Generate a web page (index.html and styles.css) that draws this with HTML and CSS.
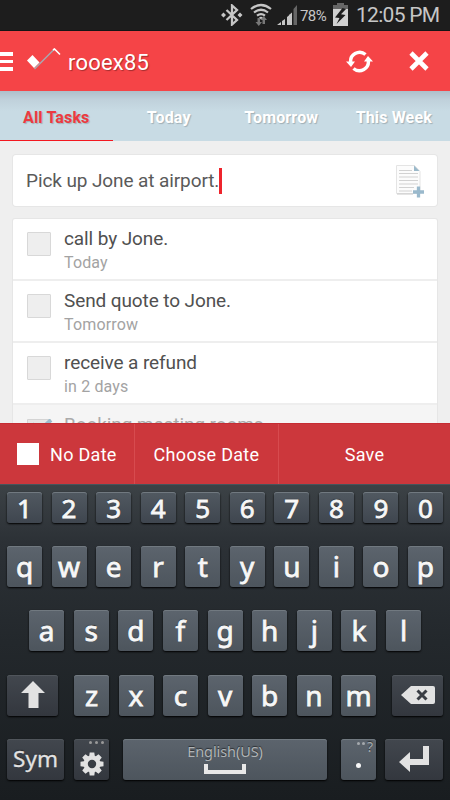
FILE: index.html
```
<!DOCTYPE html>
<html lang="en">
<head>
<meta charset="utf-8">
<title>Tasks</title>
<link rel="stylesheet" href="styles.css">
</head>
<body>
<div class="phone">
  <div class="status">
    <svg class="bt" width="22" height="22" viewBox="0 0 22 22"><path d="M5.500 6l10.500 10-5 4.500V1.500l5 4.500L5.500 16" fill="none" stroke="#c6c6c6" stroke-width="2.300"/><path d="M2.500 8.500L5 11l-2.500 2.500L0 11zM19 8.500l2.500 2.500-2.500 2.500-2.500-2.500z" fill="#c6c6c6"/></svg>
    <svg class="wifi" width="22" height="24" viewBox="0 0 22 24"><g fill="none" stroke="#c6c6c6" stroke-width="2.200"><path d="M1 6q10-8 20 0M4 9.500q7-5.500 14 0M7 12.700q4-3 8 0"/></g><path d="M9 14.500q2-1.500 4 0l-2 2z" fill="#c6c6c6"/><path d="M7.500 15h2.500v4h2l-3.200 4-3.300-4h2zM12.500 21v-4h-2l3.200-4 3.300 4h-2v4z" fill="#777"/></svg>
    <svg class="signal" width="21" height="20" viewBox="0 0 21 20"><path d="M0 20l4-3v3zM5 16l3-2v6H5zM10 12l3-2.500V20h-3z" fill="#c6c6c6"/><path d="M12 10l3-2.500V20h-3z" fill="#c6c6c6"/><path d="M16.500 4l3.500-4v20h-3.500z" fill="#666"/></svg>
    <span class="pct">78%</span>
    <svg class="battery" width="15" height="23" viewBox="0 0 15 23"><path d="M4 0h7v2h4v6H0V2h4z" fill="#666"/><path d="M0 6h15v17H0z" fill="#d0d0d0"/><path d="M9.500 5L2 14.500l4.500.5L3.500 21l9-9-4.500-.7L13 6z" fill="#1d1d1d"/></svg>
    <span class="clock">12:05 PM</span>
  </div>
  <header class="header">
    <div class="menu"><i></i><i></i><i></i></div>
    <svg class="logo" width="34" height="22" viewBox="0 0 34 22"><path d="M7.500 21L27.500 1" stroke="#a9aab0" stroke-width="1.500"/><path d="M26 2l1.500-1L33 6.500" fill="none" stroke="#fff" stroke-width="1.600"/><path d="M0 12.500L5.500 7l7 7.500L7 20z" fill="#fff"/></svg>
    <span class="user">rooex85</span>
    <svg class="sync" width="27" height="23" viewBox="0 0 27 23"><g fill="none" stroke="#fff" stroke-width="3.400"><path d="M4.800 13A9 9 0 0 1 19.500 4.500M22.200 10A9 9 0 0 1 7.500 18.500"/></g><path d="M0 11.500h9L5 17zM18 11.500h9L22 6z" fill="#fff"/></svg>
    <svg class="close" width="20" height="20" viewBox="0 0 20 20"><path d="M2 2l16 16M18 2L2 18" stroke="#fff" stroke-width="4.600"/></svg>
  </header>
  <nav class="tabs">
    <span class="tab active">All Tasks</span><span class="tab">Today</span><span class="tab">Tomorrow</span><span class="tab">This Week</span>
  </nav>
  <main class="content">
    <div class="entry">
      <span class="entry-text">Pick up Jone at airport.</span><i class="caret"></i>
      <svg class="note" width="30" height="34" viewBox="0 0 30 34"><path d="M1.500 1.500h18l5.500 6v22h-23.500z" fill="#fcfcfc" stroke="#e4e4e4"/><path d="M4 6.500h13M4 9.500h19M4 13h19M4 16.500h19M4 20h19M4 23.500h15M4 27h13" stroke="#d2d2d2"/><path d="M2 30h16" stroke="#c9c9c9"/><path d="M19 1.500v5.500h5.500z" fill="#9bb9ca"/><path d="M23.500 22.500v11M18 28h11" stroke="#9ab9cc" stroke-width="3.300"/></svg>
    </div>
    <div class="list">
      <div class="task"><i class="box"></i><div><p class="title">call by Jone.</p><p class="due">Today</p></div></div>
      <div class="task"><i class="box"></i><div><p class="title">Send quote to Jone.</p><p class="due">Tomorrow</p></div></div>
      <div class="task"><i class="box"></i><div><p class="title">receive a refund</p><p class="due">in 2 days</p></div></div>
      <div class="task done"><svg class="box-done" width="27" height="25" viewBox="0 0 27 25"><path d="M.5.5h23v23H.5z" fill="#e6e6e6" stroke="#d4d4d4"/><path d="M5 5l7 7L24 1" fill="none" stroke="#9bbccd" stroke-width="4"/></svg><div><p class="title">Booking meeting rooms</p></div></div>
    </div>
  </main>
  <div class="actions">
    <span class="action nodate"><i></i>No Date</span><span class="action choose">Choose Date</span><span class="action save">Save</span>
  </div>
  <div class="keyboard">
    <div class="row digits"><b class="key">1</b><b class="key">2</b><b class="key">3</b><b class="key">4</b><b class="key">5</b><b class="key">6</b><b class="key">7</b><b class="key">8</b><b class="key">9</b><b class="key">0</b></div>
    <div class="row"><b class="key">q</b><b class="key">w</b><b class="key">e</b><b class="key">r</b><b class="key">t</b><b class="key">y</b><b class="key">u</b><b class="key">i</b><b class="key">o</b><b class="key">p</b></div>
    <div class="row home"><b class="key">a</b><b class="key">s</b><b class="key">d</b><b class="key">f</b><b class="key">g</b><b class="key">h</b><b class="key">j</b><b class="key">k</b><b class="key">l</b></div>
    <div class="row lower">
      <b class="key dark wide"><svg width="24" height="27" viewBox="0 0 24 27"><path d="M12 0l12 12h-6.500v15h-10V12H0z" fill="#e2e2e2"/></svg></b>
      <div class="letters"><b class="key">z</b><b class="key">x</b><b class="key">c</b><b class="key">v</b><b class="key">b</b><b class="key">n</b><b class="key">m</b></div>
      <b class="key dark wide"><svg width="34" height="18" viewBox="0 0 34 18"><path d="M10 0h22q2 0 2 2v14q0 2-2 2H10L0 9z" fill="#e2e2e2"/><path d="M16.500 4.500l9 9M25.500 4.500l-9 9" stroke="#393d44" stroke-width="3"/></svg></b>
    </div>
    <div class="row bottom">
      <b class="key dark sym">Sym</b>
      <b class="key dark gear"><span class="dots"><i></i><i></i><i></i></span><svg width="24" height="24" viewBox="-12 -12 24 24"><g fill="#e2e2e2"><path id="tooth" d="M-2.300-11.500h4.600l.7 5h-6zM-2.300 11.500h4.600l.7-5h-6z"/><use href="#tooth" transform="rotate(45)"/><use href="#tooth" transform="rotate(90)"/><use href="#tooth" transform="rotate(135)"/></g><circle r="6.300" fill="none" stroke="#e2e2e2" stroke-width="4.200"/></svg></b>
      <b class="key space"><span>English(US)</span><i></i></b>
      <b class="key period"><span class="hint"><i></i><i></i>?</span><i class="dot"></i></b>
      <b class="key dark enter"><svg width="30" height="26" viewBox="0 0 30 26"><path d="M0 16L11 6v7h13V0h6v19H11v7z" fill="#e2e2e2"/></svg></b>
    </div>
  </div>
</div>
</body>
</html>
```

FILE: styles.css
```
* { box-sizing: border-box; }
body { margin: 0; }
p { margin: 0; }
i { display: block; font-style: normal; }
svg { display: block; flex: none; }
.phone { width: 450px; height: 800px; overflow: hidden; display: flex; flex-direction: column; background: #efefef; font-family: Roboto, "Liberation Sans", sans-serif; white-space: nowrap; }

.status { height: 31px; flex: none; background: #1d1d1d; display: flex; color: #c6c6c6; align-items: flex-start; border-bottom: 1px solid #151515; }
.bt { margin: 4px 0 0 221px; }
.wifi { margin: 3px 0 0 7px; }
.signal { margin: 5px 0 0 5px; width: 21px; }
.pct { width: 30px; margin: 6px 0 0 2px; font-size: 15px; line-height: 20px; letter-spacing: -.6px; }
.battery { margin: 3px 0 0 3px; }
.clock { margin: 3px 0 0 8px; font-size: 21px; line-height: 25px; letter-spacing: -.7px; }

.header { height: 60px; flex: none; background: #f54447; display: flex; align-items: flex-start; color: #fff; }
.menu { width: 13px; margin-top: 21px; display: grid; gap: 4px; }
.menu i { height: 3.500px; background: #fff; }
.logo { margin: 17px 0 0 14px; }
.user { margin: 19px 0 0 7px; width: 120px; font-size: 22px; line-height: 26px; letter-spacing: .2px; text-shadow: 1px 1px 1px #0005; }
.sync { margin: 19px 0 0 158px; }
.close { margin: 20px 0 0 36px; }

.tabs { height: 50px; flex: none; display: grid; grid-template-columns: repeat(4, 112.500px); background: linear-gradient(#aebfca, #c0d1db 18%, #c8dbe4 40%); }
.tab { text-align: center; font-size: 16px; font-weight: 700; line-height: 53px; letter-spacing: .15px; color: #fff; text-shadow: 1px 1px 1px #0003; height: 50px; }
.tab.active { color: #ec3a40; border-bottom: 1px solid #f31820; }

.content { height: 282px; flex: none; padding: 14px 13px 0; overflow: hidden; }
.entry { height: 51px; background: #fff; border-radius: 3px; box-shadow: 0 0 0 1px #e6e6e6; display: flex; align-items: center; padding-left: 13px; }
.entry-text { font-size: 19px; letter-spacing: -.1px; color: #5a5a5a; width: 192px; }
.caret { width: 3px; height: 26px; background: #ee242c; margin-left: 1px; }
.note { margin-left: 173px; }
.list { margin-top: 13px; height: 260px; background: #fff; box-shadow: 0 0 0 1px #e6e6e6; border-radius: 2px; }
.task { height: 62px; border-bottom: 2px solid #eee; display: flex; padding: 7px 0 0 14px; }
.box { width: 24px; height: 24px; border: 1px solid #d8d8d8; background: #eee; border-radius: 1px; margin: 6px 13px 0 0; }
.title { font-size: 19px; line-height: 26px; letter-spacing: -.1px; color: #505050; }
.due { font-size: 16px; line-height: 22px; letter-spacing: .15px; color: #a3a3a3; }
.done { background: #f5f5f5; }
.done .title { color: #aaa; }
.box-done { margin: 7px 10px 0 0; }

.actions { height: 61px; flex: none; display: flex; background: #cc373c; border-top: 1px solid #c62c33; color: #fff; font-size: 18px; letter-spacing: .3px; }
.action { display: flex; align-items: center; justify-content: center; }
.nodate { width: 134px; justify-content: flex-start; padding-left: 17px; }
.nodate i { width: 22px; height: 22px; background: #fff; margin-right: 11px; }
.choose { width: 145px; border-left: 1px solid #d74b4f; border-right: 1px solid #d74b4f; }
.save { width: 171px; }

.keyboard { height: 316px; flex: none; padding: 7px 7px 0; background: linear-gradient(#3c4246, #2c3136 18%, #23282c 50%, #191d20); border-top: 1px solid #48545b; font-family: "Noto Sans", sans-serif; color: #f7f7f7; }
.row { height: 41px; margin-bottom: 23.400px; display: flex; justify-content: space-between; }
.key { width: 35px; height: 41px; border-radius: 3px; background: linear-gradient(#5c646d, #4d555d); box-shadow: inset 0 1px #717980, 0 1px 2px #000; display: flex; align-items: center; justify-content: center; font-size: 28px; font-weight: 400; -webkit-text-stroke: .8px #f7f7f7; line-height: 36px; padding-bottom: 1px; text-shadow: 0 -1px 1px #0008; position: relative; }
.digits { height: 31px; margin-bottom: 23px; }
.digits .key { height: 31px; font-size: 26px; line-height: 30px; background: linear-gradient(#515961, #3f464f); padding-bottom: 0; }
.home { padding: 0 22px; }
.letters { width: 302px; display: flex; justify-content: space-between; }
.row .dark { background: linear-gradient(#42474e, #33373e); box-shadow: inset 0 1px #50555b, 0 1px 2px #000; color: #e2e2e2; }
.wide { width: 51px; }
.bottom { justify-content: flex-start; }
.bottom .key { -webkit-text-stroke: 0; }
.bottom .sym { width: 57px; font-size: 22.500px; padding-bottom: 2px; -webkit-text-stroke: .3px #e2e2e2; }
.gear { margin-left: 10px; padding-top: 10px; }
.dots { position: absolute; right: 5px; top: 2px; display: flex; gap: 3px; }
.dots i { width: 3px; height: 3px; border-radius: 50%; background: #999; }
.space { width: 204px; margin-left: 14px; flex-direction: column; justify-content: flex-start; }
.space span { font-size: 14.500px; letter-spacing: -.1px; line-height: 16px; margin-top: 4px; color: #b0b4b7; }
.space i { width: 42px; height: 10px; border: 4px solid #e8e8e8; border-top: 0; margin-top: 5px; }
.period { margin-left: 14px; padding-top: 12px; }
.dot { width: 5px; height: 5px; border-radius: 50%; background: #f7f7f7; }
.hint { position: absolute; right: 3px; top: 0; display: flex; gap: 2px; font-size: 14px; line-height: 15px; color: #a5a9ad; }
.hint i { width: 3px; height: 3px; border-radius: 50%; background: #a5a9ad; margin-top: 3px; }
.enter { width: 58px; margin-left: 9px; }
```
